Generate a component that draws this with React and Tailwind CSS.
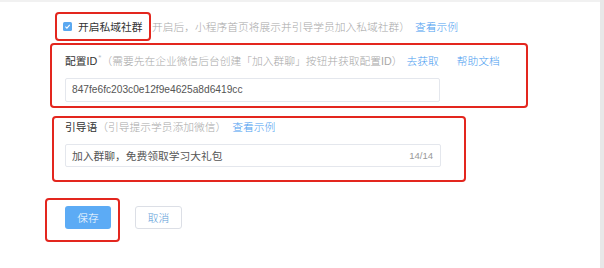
import React from "react";

const F = { fontFamily: '"Liberation Sans", "Noto Sans CJK SC", sans-serif' };

export default function App() {
  return (
    <div
      className="flex h-[268px] w-[604px] overflow-hidden bg-white text-[10.75px] leading-[16px]"
      style={F}
    >
      <div className="flex-1 border-t-2 border-[#f1f1f1]">
        {/* Row 1 */}
        <div className="mt-[10px] flex items-center">
          <div className="ml-[55px] flex h-[29px] w-[96px] items-center rounded-[4px] border-2 border-[#e3261e] pl-[6px]">
            <span className="flex h-[9px] w-[9px] items-center justify-center rounded-[1.5px] bg-[#5aa8f0]">
              <svg width="7" height="7" viewBox="0 0 10 10">
                <path d="M2 5.2 L4.2 7.3 L8.2 2.8" fill="none" stroke="#fff" strokeWidth="1.6" />
              </svg>
            </span>
            <span className="ml-[6px] text-[#333]">开启私域社群</span>
          </div>
          <span className="ml-[1px] font-light text-[#a8a8a8]">开启后，小程序首页将展示并引导学员加入私域社群）</span>
          <span className="ml-[5px] font-light text-[#4a9cf0]">查看示例</span>
        </div>

        {/* Box 2 */}
        <div className="ml-[50px] mt-[2px] h-[65px] w-[478px] rounded-[4px] border-2 border-[#e3261e] pl-[13px] pt-[8px]">
          <div className="flex items-center">
            <span className="text-[#333]">配置ID</span>
            <span className="relative top-[-3px] ml-[1px] text-[8px] leading-[10px] text-[#bbb]">*</span>
            <span className="font-light text-[#a8a8a8]">（需要先在企业微信后台创建「加入群聊」按钮并获取配置ID）</span>
            <span className="ml-[4px] font-light text-[#4a9cf0]">去获取</span>
            <span className="ml-[18px] font-light text-[#4a9cf0]">帮助文档</span>
          </div>
          <div className="mt-[9px] flex h-[24px] w-[375px] items-center rounded-[2px] border border-[#e4e7ed] pl-[6px] text-[10.2px] text-[#555]">
            847fe6fc203c0e12f9e4625a8d6419cc
          </div>
        </div>

        {/* Box 3 */}
        <div className="ml-[52px] mt-[8px] h-[66px] w-[414px] rounded-[4px] border-2 border-[#e3261e] pl-[11px] pt-[1px]">
          <div className="flex items-center">
            <span className="text-[#333]">引导语</span>
            <span className="font-light text-[#a8a8a8]">（引导提示学员添加微信）</span>
            <span className="ml-[6px] font-light text-[#4a9cf0]">查看示例</span>
          </div>
          <div className="mt-[9px] flex h-[23px] w-[376px] items-center justify-between rounded-[2px] border border-[#e4e7ed] pl-[6px] pr-[7px] text-[#555]">
            <span>加入群聊，免费领取学习大礼包</span>
            <span className="text-[9.5px] text-[#999]">14/14</span>
          </div>
        </div>

        {/* Buttons */}
        <div className="mt-[16px] flex items-start">
          <div className="ml-[45px] h-[44px] w-[75px] rounded-[4px] border-2 border-[#e3261e] pl-[18px] pt-[6px]">
            <div className="flex h-[23px] w-[46px] items-center justify-center rounded-[3px] bg-[#5cabf5] font-light text-white">
              保存
            </div>
          </div>
          <div className="ml-[15px] mt-[8px] flex h-[23px] w-[47px] items-center justify-center rounded-[3px] border border-[#dcdfe6] font-light text-[#5a9bd8]">
            取消
          </div>
        </div>
      </div>
      <div className="w-[4px] bg-[#e8e8e8]" />
    </div>
  );
}
